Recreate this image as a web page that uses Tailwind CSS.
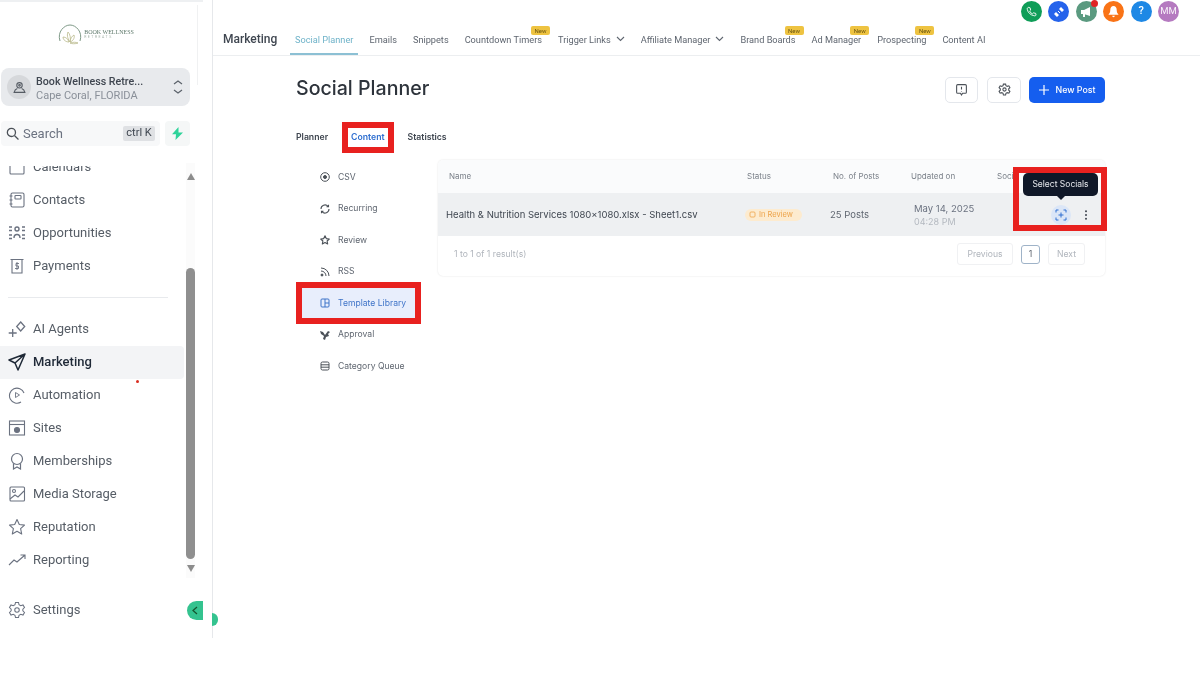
<!doctype html>
<html>
<head>
<meta charset="utf-8">
<script src="https://cdn.jsdelivr.net/npm/@tailwindcss/browser@4"></script>
</head>
<body class="bg-white">
<div class="relative flex h-[687px] w-[1200px] items-start overflow-hidden bg-white font-['Roboto',sans-serif] blur-[0.35px]">

  <!-- SIDEBAR -->
  <aside class="relative flex h-[638px] w-[213px] shrink-0 flex-col border-r border-[#e6e8eb] pr-[22px]">
    <div class="h-[2px] w-[203px] bg-[#eef0f2]"></div>
    <!-- logo -->
    <div class="flex h-[66px] items-start justify-center gap-[2px] pt-[22px] pl-[2px]">
      <svg class="h-[21px] w-[24px]" viewBox="0 0 24 21" fill="none" stroke="#8fae9a" stroke-width="1"><path d="M2 17C-1 8 6 1 12 1s13 7 10 16" stroke="#7f9a88"/><path d="M12 18C9 14 9 10 10 8c2 2 3 6 2 10ZM12 18c0-3 2-6 4-7 1 3-1 6-4 7ZM11 18c-1-3-3-5-6-5 0 3 3 5 6 5ZM12 19c3-1 6-1 8 0-3 1-6 1-8 0Z" stroke="#b9b98a" stroke-width=".8"/></svg>
      <div class="flex flex-col pt-[5px] leading-none">
        <span class="font-['Liberation_Serif',serif] text-[6px] whitespace-nowrap text-[#5f7a6c]">BOOK WELLNESS</span>
        <span class="mt-[1px] text-[3.5px] tracking-[1.5px] text-[#a5b3a9]">RETREATS</span>
      </div>
    </div>
    <!-- org switcher -->
    <div class="ml-[1px] flex h-[38px] w-[189px] items-center rounded-[8px] bg-[#e8eaed] pl-[6px] pr-[6px]">
      <div class="flex h-[24px] w-[24px] items-center justify-center rounded-full bg-[#d6d8db]">
        <svg class="h-[13px] w-[13px]" viewBox="0 0 24 24" fill="none" stroke="#555b63" stroke-width="2"><circle cx="12" cy="8" r="5"/><path d="M8 14c-3 1-5 3-6 7h20c-1-4-3-6-6-7"/><circle cx="12" cy="8" r="1.5"/></svg>
      </div>
      <div class="ml-[5px] flex min-w-0 flex-1 flex-col pt-[4px] leading-[14px]">
        <span class="text-[10.7px] font-medium whitespace-nowrap text-[#3f4650]">Book Wellness Retre...</span>
        <span class="text-[11px] whitespace-nowrap text-[#8a9099]">Cape Coral, FLORIDA</span>
      </div>
      <svg class="h-[18px] w-[12px]" viewBox="0 0 12 18" fill="none" stroke="#5c636b" stroke-width="1.2"><path d="M2 6l4-3 4 3M2 12l4 3 4-3"/></svg>
    </div>
    <!-- search -->
    <div class="mt-[15px] flex h-[25px] gap-[5px] pl-[1px]">
      <div class="flex w-[159px] items-center rounded-[4px] bg-[#f7f8f9] pl-[5px] pr-[5px]">
        <svg class="h-[13px] w-[13px]" viewBox="0 0 24 24" fill="none" stroke="#4b5158" stroke-width="2.4"><circle cx="10" cy="10" r="7.5"/><path d="M16 16l7 7"/></svg>
        <span class="ml-[4px] flex-1 text-[13px] text-[#6b7280]">Search</span>
        <span class="flex h-[15px] w-[32px] items-center justify-center rounded-[2px] bg-[#dfe1e4] text-[11px] whitespace-nowrap text-[#3f4650]">ctrl K</span>
      </div>
      <div class="flex w-[25px] items-center justify-center rounded-[4px] bg-[#f5f7f7]">
        <svg class="h-[13px] w-[11px]" viewBox="0 0 11 13" fill="#2fd39a"><path d="M6.5 0L0 7.2h4L3.5 13 11 5.5H6.5z"/></svg>
      </div>
    </div>
    <!-- nav -->
    <nav class="relative mt-[20px] h-[412px] overflow-hidden">
      <div class="-mt-[15.500px] flex flex-col text-[13px] text-[#565d66]">
        <div class="flex h-[33px] items-center gap-[7px] pl-[8px]">
          <svg class="h-[18px] w-[18px]" viewBox="0 0 18 18" fill="none" stroke="#6b7280" stroke-width="1.1"><rect x="2" y="3" width="14" height="13" rx="1"/></svg>Calendars
        </div>
        <div class="flex h-[33px] items-center gap-[7px] pl-[8px]">
          <svg class="h-[18px] w-[18px]" viewBox="0 0 18 18" fill="none" stroke="#6b7280" stroke-width="1.1"><rect x="3" y="2" width="13" height="14" rx="1.5"/><rect x="7" y="4.5" width="6" height="3.5" rx=".6"/><path d="M1.5 5h3M1.5 9h3M1.5 13h3"/></svg>Contacts
        </div>
        <div class="flex h-[33px] items-center gap-[7px] pl-[8px]">
          <svg class="h-[18px] w-[18px]" viewBox="0 0 18 18" fill="none" stroke="#6b7280" stroke-width="1.4"><circle cx="9" cy="5" r="2"/><path d="M6 14c0-2.500 1-3.500 3-3.500s3 1 3 3.500"/><path d="M1 3h3M1 6.500h3M14 3h3M14 6.500h3M1 11h3M1 14.500h3M14 11h3M14 14.500h3"/></svg>Opportunities
        </div>
        <div class="flex h-[33px] items-center gap-[7px] pl-[8px]">
          <svg class="h-[18px] w-[18px]" viewBox="0 0 18 18" fill="none" stroke="#6b7280" stroke-width="1.1"><path d="M2.5 2.5h13M4 2.5V16h10V2.5"/><path d="M11 6.5H8v2.5h2.5v2.5H7M9 5v8" stroke-width=".9"/></svg>Payments
        </div>
        <div class="flex h-[30px] items-center pl-[8px]"><div class="h-px w-[160px] bg-[#e8eaed]"></div></div>
        <div class="flex h-[33px] items-center gap-[7px] pl-[8px]">
          <svg class="h-[18px] w-[18px]" viewBox="0 0 18 18" fill="none" stroke="#6b7280" stroke-width="1.3"><path d="M4.700 9v8M.7 13h8"/><path d="M12.700 2l4 4.500-4 4.500-4-4.500z"/></svg>AI Agents
        </div>
        <div class="flex h-[33px] w-[184px] items-center gap-[7px] rounded-r-[4px] bg-[#f3f4f6] pl-[8px] font-medium text-[#1f2937]">
          <svg class="h-[18px] w-[18px]" viewBox="0 0 18 18" fill="none" stroke="#1f2937" stroke-width="1.5" stroke-linejoin="round"><path d="M17 1L1 7l6 3 3 7zM7 10l10-9"/></svg>Marketing
        </div>
        <div class="flex h-[33px] items-center gap-[7px] pl-[8px]">
          <svg class="h-[18px] w-[18px]" viewBox="0 0 18 18" fill="none" stroke="#6b7280" stroke-width="1.1"><path d="M16 7a7.500 7.500 0 1 0-3 9"/><path d="M7.500 6.500l4 2.500-4 2.500z" stroke-width=".9"/></svg>Automation
        </div>
        <div class="flex h-[33px] items-center gap-[7px] pl-[8px]">
          <svg class="h-[18px] w-[18px]" viewBox="0 0 18 18" fill="none" stroke="#6b7280" stroke-width="1.1"><rect x="1.500" y="2" width="15" height="14"/><path d="M1.500 5.500h15"/><circle cx="9" cy="11" r="2.500" fill="#6b7280"/></svg>Sites
        </div>
        <div class="flex h-[33px] items-center gap-[7px] pl-[8px]">
          <svg class="h-[18px] w-[18px]" viewBox="0 0 18 18" fill="none" stroke="#6b7280" stroke-width="1.2"><circle cx="9" cy="7" r="5.500"/><path d="M5.500 11.500V17l3.500-2 3.500 2v-5.500"/></svg>Memberships
        </div>
        <div class="flex h-[33px] items-center gap-[7px] pl-[8px]">
          <svg class="h-[18px] w-[18px]" viewBox="0 0 18 18" fill="none" stroke="#6b7280" stroke-width="1.1"><rect x="2" y="2" width="14.500" height="14" rx="1"/><circle cx="6" cy="6" r="1.500"/><path d="M2 14l5-4 3 2 6-6"/></svg>Media Storage
        </div>
        <div class="flex h-[33px] items-center gap-[7px] pl-[8px]">
          <svg class="h-[18px] w-[18px]" viewBox="0 0 18 18" fill="none" stroke="#6b7280" stroke-width="1.1" stroke-linejoin="round"><path d="M9 1.500l2.300 5 5.200.6-3.900 3.600 1.100 5.300L9 13.300 4.300 16l1.100-5.300L1.500 7.100l5.200-.6z"/></svg>Reputation
        </div>
        <div class="flex h-[33px] items-center gap-[7px] pl-[8px]">
          <svg class="h-[18px] w-[18px]" viewBox="0 0 18 18" fill="none" stroke="#6b7280" stroke-width="1.1"><path d="M1 14l5-5 3 2 8-7M12.500 4H17v4"/></svg>Reporting
        </div>
      </div>
    </nav>
    <!-- settings -->
    <div class="mt-[15px] flex h-[33px] items-center gap-[7px] pl-[8px] text-[13px] text-[#565d66]">
      <svg class="h-[18px] w-[18px]" viewBox="0 0 24 24" fill="none" stroke="#6b7280" stroke-width="1.400"><circle cx="12" cy="12" r="3"/><path d="M10 2h4l.7 3 2.300 1.200 3-1 2 3.500-2.200 2.100v2.400l2.200 2.100-2 3.500-3-1L14.700 19 14 22h-4l-.7-3L7 17.800l-3 1-2-3.500 2.200-2.100v-2.400L2 8.700l2-3.500 3 1L9.300 5z"/></svg>Settings
    </div>
    <!-- scrollbar overlay -->
    <div class="absolute left-[186px] top-[163px] flex h-[415px] w-[9px] flex-col items-center bg-[#fbfbfb]">
      <div class="mt-[10px] h-0 w-0 border-x-[4.500px] border-b-[7px] border-x-transparent border-b-[#8c8c8c]"></div>
      <div class="mt-[88px] h-[291px] w-[9px] shrink-0 rounded-full bg-[#8f8f8f]"></div>
      <div class="mt-[6px] h-0 w-0 border-x-[4.500px] border-t-[7px] border-x-transparent border-t-[#8c8c8c]"></div>
    </div>
    <div class="absolute left-[197px] top-[5px] h-[80px] w-px bg-[#f0f1f2]"></div>
    <div class="absolute left-[136px] top-[380px] h-[3px] w-[3px] rounded-full bg-[#d92d20]"></div>
    <div class="absolute left-[187px] top-[601px] flex h-[19px] w-[16px] items-center justify-center rounded-l-full rounded-r-[5px] bg-[#34c38f]">
      <svg class="h-[9px] w-[6px]" viewBox="0 0 6 9" fill="none" stroke="#14532d" stroke-width="1.200"><path d="M5 1L1 4.500 5 8"/></svg>
    </div>
    <div class="absolute left-[212px] top-[613px] h-[13px] w-[6px] rounded-r-full bg-[#34c38f]"></div>
  </aside>

  <!-- MAIN -->
  <main class="flex min-w-0 flex-1 flex-col">
    <header class="relative h-[56px] border-b border-[#eceef0]">
      <!-- round icons -->
      <div class="absolute right-[21px] top-[1px] flex gap-[6.400px]">
        <div class="flex h-[21px] w-[21px] items-center justify-center rounded-full bg-[#0f9d58]">
          <svg class="h-[11px] w-[11px]" viewBox="0 0 24 24" fill="none" stroke="#fff" stroke-width="2"><path d="M5 3l4 1 1 5-2 2c1 3 3 5 6 6l2-2 5 1 1 4c-1 1-3 2-5 1C10 20 4 14 3 8c-1-2 0-4 2-5z"/></svg>
        </div>
        <div class="flex h-[21px] w-[21px] items-center justify-center rounded-full bg-[#2563eb]">
          <svg class="h-[12px] w-[12px]" viewBox="0 0 12 12" fill="#fff"><path d="M8 1l3 3-2 2-3-3zM3 6l3 3-2 2-3-3z"/><path d="M5 5l2 2" stroke="#fff"/></svg>
        </div>
        <div class="relative flex h-[21px] w-[21px] items-center justify-center rounded-full bg-[#5b9a80]">
          <svg class="h-[12px] w-[12px]" viewBox="0 0 12 12" fill="#fff"><path d="M1 4h3l6-3v9L4 8H1zM3 8h2v3H3z"/></svg>
          <span class="absolute -right-[1px] -top-[1px] h-[7px] w-[7px] rounded-full bg-[#e02424]"></span>
        </div>
        <div class="flex h-[21px] w-[21px] items-center justify-center rounded-full bg-[#f97316]">
          <svg class="h-[13px] w-[13px]" viewBox="0 0 12 12" fill="#fff"><path d="M6 1c2 0 3 1.500 3 4 0 2 1 3 1.500 3.500v.5h-9v-.5C2 8 3 7 3 5c0-2.500 1-4 3-4zM4.800 10h2.400c0 .8-.5 1.200-1.200 1.200S4.800 10.800 4.800 10z"/></svg>
        </div>
        <div class="flex h-[21px] w-[21px] items-center justify-center rounded-full bg-[#1e88e5] text-[11px] font-medium text-white">?</div>
        <div class="flex h-[21px] w-[21px] items-center justify-center rounded-full bg-[#b57ac0] text-[9.500px] text-white/90">MM</div>
      </div>
      <!-- tabs -->
      <div class="flex h-[56px] items-center pl-[10px] pt-[23px]">
        <span class="mr-[19px] w-[53px] -translate-y-[1px] text-[12px] font-medium whitespace-nowrap text-[#3f4650]">Marketing</span>
        <div class="flex items-center gap-[16px] text-[9.200px] whitespace-nowrap text-[#5f6670]">
          <span class="relative text-[#6fb3c9]">Social Planner<span class="absolute -left-[5px] -right-[5px] top-[20px] h-[2px] bg-[#8cc0d4]"></span></span>
          <span>Emails</span>
          <span>Snippets</span>
          <span class="relative">Countdown Timers<span class="absolute right-[-8px] -top-[7px] flex h-[9px] w-[19px] items-center justify-center rounded-[2px] bg-[#eec341] text-[6px] text-[#6b5510]">New</span></span>
          <span class="flex items-center gap-[5px]">Trigger Links<svg class="h-[8px] w-[9px]" viewBox="0 0 9 8" fill="none" stroke="#5f6670" stroke-width="1.100"><path d="M1 2l3.500 3.500L8 2"/></svg></span>
          <span class="flex items-center gap-[5px]">Affiliate Manager<svg class="h-[8px] w-[9px]" viewBox="0 0 9 8" fill="none" stroke="#5f6670" stroke-width="1.100"><path d="M1 2l3.500 3.500L8 2"/></svg></span>
          <span class="relative">Brand Boards<span class="absolute right-[-8px] -top-[7px] flex h-[9px] w-[19px] items-center justify-center rounded-[2px] bg-[#eec341] text-[6px] text-[#6b5510]">New</span></span>
          <span class="relative">Ad Manager<span class="absolute right-[-8px] -top-[7px] flex h-[9px] w-[19px] items-center justify-center rounded-[2px] bg-[#eec341] text-[6px] text-[#6b5510]">New</span></span>
          <span class="relative">Prospecting<span class="absolute right-[-8px] -top-[7px] flex h-[9px] w-[19px] items-center justify-center rounded-[2px] bg-[#eec341] text-[6px] text-[#6b5510]">New</span></span>
          <span>Content AI</span>
        </div>
      </div>
    </header>

    <div class="ml-[83px] w-[809px] font-['Inter',sans-serif]">
      <!-- title row -->
      <div class="mt-[20px] flex h-[27px] items-center">
        <h1 class="-mt-[1px] flex-1 text-[19.600px] font-medium text-[#2d333b]">Social Planner</h1>
        <button class="flex h-[26px] w-[33px] items-center justify-center rounded-[5px] border border-[#e4e7ec]">
          <svg class="h-[13px] w-[13px]" viewBox="0 0 24 24" fill="none" stroke="#4b5158" stroke-width="2"><path d="M5 3h14a2 2 0 0 1 2 2v12a2 2 0 0 1-2 2h-5l-2 3-2-3H5a2 2 0 0 1-2-2V5a2 2 0 0 1 2-2zM12 7v5M12 15v1"/></svg>
        </button>
        <button class="ml-[9px] flex h-[26px] w-[34px] items-center justify-center rounded-[5px] border border-[#e4e7ec]">
          <svg class="h-[13px] w-[13px]" viewBox="0 0 24 24" fill="none" stroke="#4b5158" stroke-width="2"><circle cx="12" cy="12" r="3"/><path d="M10 2h4l.7 3 2.300 1.200 3-1 2 3.500-2.200 2.100v2.400l2.200 2.100-2 3.500-3-1L14.700 19 14 22h-4l-.7-3L7 17.800l-3 1-2-3.500 2.200-2.100v-2.400L2 8.700l2-3.500 3 1L9.300 5z"/></svg>
        </button>
        <button class="ml-[8px] flex h-[26px] w-[76px] items-center justify-center gap-[7px] rounded-[5px] bg-[#155eef] text-[8.800px] font-medium text-white">
          <svg class="h-[10px] w-[10px]" viewBox="0 0 10 10" stroke="#fff" stroke-width="1.200"><path d="M5 0v10M0 5h10"/></svg>New Post
        </button>
      </div>
      <!-- sub tabs -->
      <div class="relative mt-[25px] flex h-[20px] items-center gap-[23px] text-[8.700px] font-semibold text-[#3f4650]">
        <span>Planner</span>
        <span class="text-[#2f6fd0]">Content</span>
        <span>Statistics</span>
        <div class="absolute left-[46px] top-[-6px] h-[31px] w-[52px] border-[6px] border-[#e8211f]"></div>
      </div>
      <!-- body -->
      <div class="mt-[12px] flex">
        <ul class="w-[142px] shrink-0 pt-[1.500px] text-[8.600px] text-[#5f6670]">
          <li class="flex h-[31.500px] items-center gap-[8px] pl-[24px]">
            <svg class="h-[10px] w-[10px]" viewBox="0 0 10 10" fill="none" stroke="#4b5158"><circle cx="5" cy="5" r="4.300"/><circle cx="5" cy="5" r="1.500" fill="#4b5158"/></svg>CSV
          </li>
          <li class="flex h-[31.500px] items-center gap-[8px] pl-[24px]">
            <svg class="h-[10px] w-[10px]" viewBox="0 0 10 10" fill="none" stroke="#4b5158" stroke-width="1.100"><path d="M1 5a4 4 0 0 1 7-2.700M9 5a4 4 0 0 1-7 2.700M8.500 .8v2H6.500M1.500 9.200v-2h2"/></svg>Recurring
          </li>
          <li class="flex h-[31.500px] items-center gap-[8px] pl-[24px]">
            <svg class="h-[10px] w-[10px]" viewBox="0 0 10 10" fill="none" stroke="#4b5158" stroke-width="1.100" stroke-linejoin="round"><path d="M5 .8l1.300 2.800 3 .4-2.200 2 .6 3L5 7.500 2.300 9l.6-3-2.200-2 3-.4z"/></svg>Review
          </li>
          <li class="flex h-[31.500px] items-center gap-[8px] pl-[24px]">
            <svg class="h-[10px] w-[10px]" viewBox="0 0 10 10" fill="none" stroke="#4b5158"><path d="M1 1a8 8 0 0 1 8 8M1 4a5 5 0 0 1 5 5"/><circle cx="2" cy="8" r="1" fill="#4b5158"/></svg>RSS
          </li>
          <li class="-my-[5.250px] flex h-[42px] w-[125px] items-center gap-[8px] border-[6px] border-[#e8211f] bg-[#e8eefc] pl-[18px] text-[#3f74c8]">
            <svg class="h-[10px] w-[10px]" viewBox="0 0 10 10" fill="none" stroke="#3f74c8"><rect x="1" y="1" width="8" height="8" rx="1"/><path d="M5 1v8M5 5h4"/></svg>Template Library
          </li>
          <li class="flex h-[31.500px] items-center gap-[8px] pl-[24px]">
            <svg class="h-[10px] w-[10px]" viewBox="0 0 10 10" fill="#4b5158"><path d="M0 1l3 1 2 3 3-4 2 1-2 2 1 2-3 1-1 3-2-1 1-3-3-2z"/></svg>Approval
          </li>
          <li class="flex h-[31.500px] items-center gap-[8px] pl-[24px]">
            <svg class="h-[10px] w-[10px]" viewBox="0 0 10 10" fill="none" stroke="#4b5158"><rect x="1" y="1" width="8" height="8" rx="1.500"/><path d="M1 3.800h8M1 6.200h8"/></svg>Category Queue
          </li>
        </ul>
        <!-- table card -->
        <div class="relative h-[116px] w-[667px] rounded-[5px] bg-white shadow-[0_0_2px_rgba(0,0,0,0.12)]">
          <div class="flex h-[33px] items-center rounded-t-[5px] bg-[#fafbfc] pb-[1px] text-[8px] text-[#7a8089]">
            <span class="w-[309px] pl-[11px]">Name</span>
            <span class="w-[86px]">Status</span>
            <span class="w-[78px]">No. of Posts</span>
            <span class="w-[86px]">Updated on</span>
            <span>Soci</span>
          </div>
          <div class="flex h-[43px] items-center bg-[#eef0f2]">
            <span class="w-[307px] pl-[8px] pt-[1px] text-[9.500px] whitespace-nowrap text-[#3f4650]">Health &amp; Nutrition Services 1080×1080.xlsx - Sheet1.csv</span>
            <span class="flex h-[12px] w-[57px] items-center gap-[3px] rounded-full bg-[#fdebcf] pl-[4px] text-[7.500px] text-[#eda34a]">
              <svg class="h-[7px] w-[7px]" viewBox="0 0 7 7" fill="none" stroke="#eda34a" stroke-width=".8"><rect x="1" y="1" width="5" height="5" rx="1"/></svg>In Review
            </span>
            <span class="ml-[28px] w-[84px] pt-[1px] text-[9.500px] text-[#5f6670]">25 Posts</span>
            <div class="flex w-[137px] flex-col leading-[13px]">
              <span class="text-[9.500px] text-[#6b7280]">May 14, 2025</span>
              <span class="text-[9px] text-[#b4b9c0]">04:28 PM</span>
            </div>
            <div class="flex h-[20px] w-[20px] items-center justify-center rounded-full bg-[#dbe6f7]">
              <svg class="h-[12px] w-[12px]" viewBox="0 0 12 12" fill="none" stroke="#2f6fd0"><path d="M1 3.500V1h2.500M8.500 1H11v2.500M11 8.500V11H8.500M3.500 11H1V8.500M6 3.500v5M3.500 6h5"/></svg>
            </div>
            <svg class="ml-[13px] h-[10px] w-[4px]" viewBox="0 0 4 10" fill="#3f4650"><circle cx="2" cy="1.200" r="1"/><circle cx="2" cy="5" r="1"/><circle cx="2" cy="8.800" r="1"/></svg>
          </div>
          <div class="flex h-[40px] items-center pr-[20px] pb-[4px] text-[8.600px] text-[#b0b5bc]">
            <span class="flex-1 pl-[16px]">1 to 1 of 1 result(s)</span>
            <span class="flex h-[22px] w-[56px] items-center justify-center rounded-[3px] border border-[#f0f1f3]">Previous</span>
            <span class="ml-[8px] flex h-[19px] w-[19px] items-center justify-center rounded-[3px] border border-[#9fb3c8] text-[#5f6670]">1</span>
            <span class="ml-[8px] flex h-[22px] w-[37px] items-center justify-center rounded-[3px] border border-[#f0f1f3]">Next</span>
          </div>
          <!-- red annotation -->
          <div class="absolute left-[575px] top-[7px] h-[64px] w-[94px] border-[6px] border-[#e8211f]"></div>
          <!-- tooltip -->
          <div class="absolute left-[585px] top-[13px] flex h-[23px] w-[75px] items-center justify-center rounded-[5px] bg-[#101828] text-[8.500px] whitespace-nowrap text-[#e5e7eb]">Select Socials</div>
          <div class="absolute left-[619px] top-[36px] h-0 w-0 border-x-[4px] border-t-[4px] border-x-transparent border-t-[#101828]"></div>
        </div>
      </div>
    </div>
  </main>
</div>
</body>
</html>
